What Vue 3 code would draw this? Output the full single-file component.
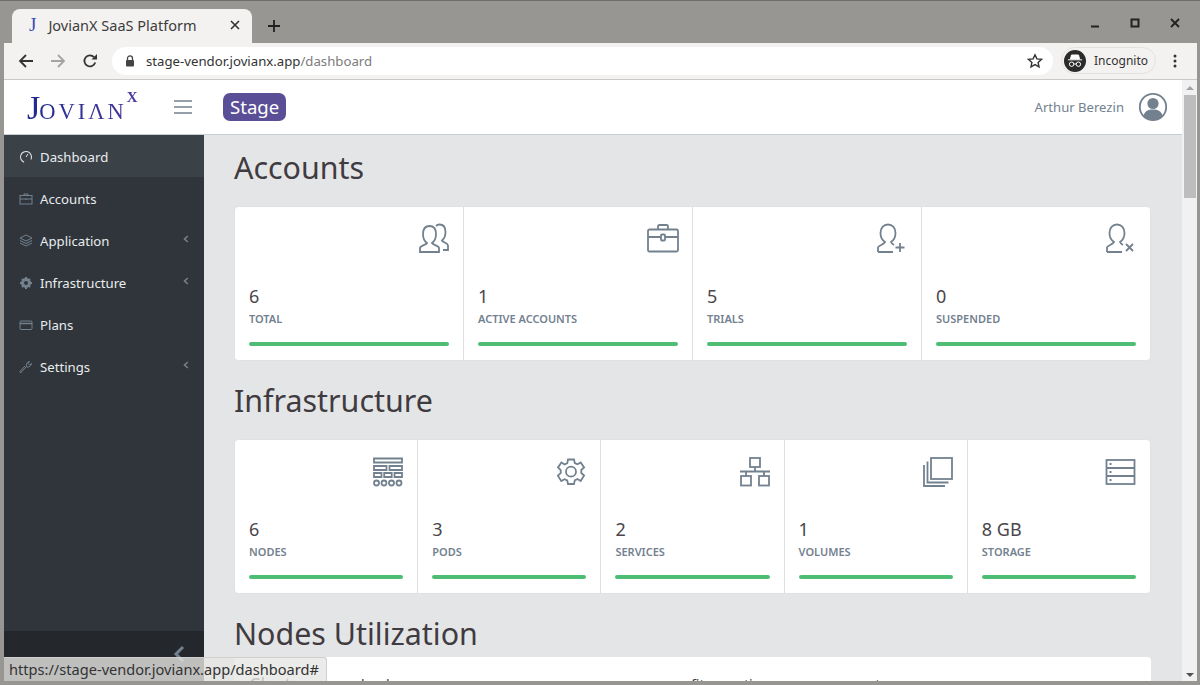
<template>
  <div class="window">
    <!-- browser chrome -->
    <div class="titlebar">
      <div class="tab">
        <span class="favicon">J</span>
        <span class="tab-title">JovianX SaaS Platform</span>
        <svg class="tab-close" width="10" height="10" viewBox="0 0 10 10"><path d="M1 1l8 8M9 1l-8 8" stroke="#333" stroke-width="1.6" /></svg>
      </div>
      <svg class="new-tab" width="14" height="14" viewBox="0 0 14 14"><path d="M7 1v12M1 7h12" stroke="#222" stroke-width="1.8" /></svg>
      <div class="win-btns">
        <svg width="10" height="10" viewBox="0 0 10 10"><path d="M1 8.500h8" stroke="#222" stroke-width="2" /></svg>
        <svg width="10" height="10" viewBox="0 0 10 10"><rect x="1.500" y="1.500" width="7" height="7" fill="none" stroke="#222" stroke-width="2" /></svg>
        <svg width="10" height="10" viewBox="0 0 10 10"><path d="M1 1l8 8M9 1l-8 8" stroke="#222" stroke-width="1.8" /></svg>
      </div>
    </div>
    <div class="toolbar">
      <svg class="nav-ico" width="16" height="16" viewBox="0 0 16 16"><path d="M15 8H2M8 2L2 8l6 6" fill="none" stroke="#333" stroke-width="1.8" /></svg>
      <svg class="nav-ico" width="16" height="16" viewBox="0 0 16 16"><path d="M1 8h13M8 2l6 6-6 6" fill="none" stroke="#a3a3a3" stroke-width="1.8" /></svg>
      <svg class="nav-ico" width="16" height="16" viewBox="0 0 16 16"><path d="M13.200 9.500A5.500 5.500 0 1 1 12 4.200" fill="none" stroke="#333" stroke-width="1.8" /><path d="M9.500 6.500H15V1z" fill="#333" /></svg>
      <div class="omnibox">
        <svg width="10" height="12" viewBox="0 0 10 12"><path d="M2.500 5V3.400a2.500 2.500 0 0 1 5 0V5" fill="none" stroke="#444" stroke-width="1.3" /><rect x="1" y="5" width="8" height="6.500" rx="1" fill="#444" /></svg>
        <span class="url">stage-vendor.jovianx.app<span class="url-path">/dashboard</span></span>
        <svg class="star" width="16" height="16" viewBox="0 0 16 16"><path d="M8 1.800l1.900 4.100 4.500.5-3.300 3 .9 4.400L8 11.600l-4 2.200.9-4.400-3.300-3 4.500-.5z" fill="none" stroke="#333" stroke-width="1.4" /></svg>
      </div>
      <div class="incognito">
        <span class="inc-ico">
          <svg width="16" height="14" viewBox="0 0 16 14"><path d="M4.500 1h7l1 4h-9zM1 5.800h14" stroke="#fff" stroke-width="1" fill="#fff" /><circle cx="4.600" cy="10.200" r="2.200" fill="none" stroke="#fff" /><circle cx="11.400" cy="10.200" r="2.200" fill="none" stroke="#fff" /><path d="M6.800 10h2.400" stroke="#fff" /></svg>
        </span>
        <span>Incognito</span>
      </div>
      <svg class="menu-dots" width="4" height="14" viewBox="0 0 4 14"><circle cx="2" cy="2" r="1.500" fill="#333" /><circle cx="2" cy="7" r="1.500" fill="#333" /><circle cx="2" cy="12" r="1.500" fill="#333" /></svg>
    </div>

    <!-- page -->
    <div class="viewport">
      <div class="page">
        <header class="app-header">
          <div class="logo"><span class="logo-j">J</span><span class="logo-rest">OVIΛN</span><sup class="logo-x">X</sup></div>
          <svg class="burger" width="20" height="16" viewBox="0 0 20 16"><path d="M1 2h18M1 8h18M1 14h18" stroke="#73818f" stroke-width="1.500" /></svg>
          <span class="badge">Stage</span>
          <span class="user-name">Arthur Berezin</span>
          <svg width="30" height="30" viewBox="0 0 30 30">
            <circle cx="15" cy="15" r="13.200" fill="none" stroke="#73818f" stroke-width="1.800" />
            <circle cx="15" cy="11.500" r="5.600" fill="#73818f" />
            <path d="M5.500 24c1-4.800 4.500-6.500 9.500-6.500s8.500 1.700 9.500 6.500a13 13 0 0 1-19 0z" fill="#73818f" />
          </svg>
        </header>
        <div class="app-body">
          <aside class="sidebar">
            <nav class="nav">
              <a v-for="item in navItems" :key="item.label" class="nav-item" :class="{ active: item.active }">
                <svg class="nav-icon" width="14" height="14" viewBox="0 0 14 14" v-html="item.icon"></svg>
                <span class="nav-label">{{ item.label }}</span>
                <svg v-if="item.sub" class="nav-caret" width="6" height="8" viewBox="0 0 6 8"><path d="M4.800 1L1.500 4l3.300 3" fill="none" stroke="#73818f" stroke-width="1.600" /></svg>
              </a>
            </nav>
            <div class="sidebar-footer">
              <svg width="12" height="18" viewBox="0 0 12 18"><path d="M10 2L3 9l7 7" fill="none" stroke="#73818f" stroke-width="3" /></svg>
            </div>
          </aside>
          <main class="main">
            <h3 class="section-title">Accounts</h3>
            <div class="stat-card">
              <div v-for="s in accountStats" :key="s.label" class="stat">
                <svg class="stat-icon" width="32" height="32" viewBox="0 0 32 32" v-html="s.icon"></svg>
                <div class="stat-value">{{ s.value }}</div>
                <div class="stat-label">{{ s.label }}</div>
                <div class="stat-bar"></div>
              </div>
            </div>
            <h3 class="section-title">Infrastructure</h3>
            <div class="stat-card">
              <div v-for="s in infraStats" :key="s.label" class="stat">
                <svg class="stat-icon" width="32" height="32" viewBox="0 0 32 32" v-html="s.icon"></svg>
                <div class="stat-value">{{ s.value }}</div>
                <div class="stat-label">{{ s.label }}</div>
                <div class="stat-bar"></div>
              </div>
            </div>
            <h3 class="section-title util-title">Nodes Utilization</h3>
            <div class="util-card">
              <span class="util-heading">Cluster</span>
              <span>load</span>
              <span>fit</span>
              <span>time</span>
              <span>rate</span>
            </div>
          </main>
        </div>
      </div>
      <div class="scrollbar">
        <span class="arrow-up"></span>
        <div class="scroll-track"><div class="scroll-thumb"></div></div>
        <span class="arrow-down"></span>
      </div>
      <div class="status-bubble">https://stage-vendor.jovianx.app/dashboard#</div>
    </div>
  </div>
</template>

<script setup>
const s = 'fill="none" stroke="#73818f" stroke-width="1"'
const navItems = [
  { label: 'Dashboard', active: true, icon: `<circle cx="7" cy="7" r="5.500" fill="none" stroke="#e4e7ea" stroke-dasharray="26 9" transform="rotate(110 7 7)"/><path d="M7 7l2-3" stroke="#e4e7ea"/>` },
  { label: 'Accounts', icon: `<rect x="1" y="3.500" width="12" height="8.500" ${s}/><path d="M5 3.500V2h4v1.500M1 7h12M7 6.500v1.500" ${s}/>` },
  { label: 'Application', sub: true, icon: `<path d="M7 1l6 3-6 3-6-3zM1 6.500l6 3 6-3M1 9l6 3 6-3" ${s}/>` },
  { label: 'Infrastructure', sub: true, icon: `<circle cx="7" cy="7" r="3.500" fill="none" stroke="#73818f" stroke-width="3"/><path d="M7 1v2M7 11v2M1 7h2M11 7h2M3 3l1.500 1.500M11 3L9.500 4.500M3 11l1.500-1.500M11 11L9.500 9.500" stroke="#73818f" stroke-width="2"/>` },
  { label: 'Plans', icon: `<rect x="1" y="3" width="12" height="8.500" rx="1" ${s}/><path d="M1 5.500h12" stroke="#73818f" stroke-width="1.500"/>` },
  { label: 'Settings', sub: true, icon: `<path d="M1.500 13l6-6.500c-.8-2 .2-4.500 3-5L9 3.500 10.500 5l2-1.500c-.3 2.500-2.500 4-5 3.500" ${s}/><path d="M1.500 13l-.5-1.500 5-5.500" ${s}/>` }
]

const ico = 'fill="none" stroke="#73818f" stroke-width="1.800"'
const accountStats = [
  { value: '6', label: 'TOTAL', icon: `<path d="M2 29v-4c0-2.500 6-3 7-5-3-2-4-5-4-9 0-5 2.500-8 6.500-8s6.500 3 6.500 8c0 4-1 7-4 9 1 2 7 2.500 7 5v4z" ${ico}/><path d="M18 3c1-1 2-1.500 3.500-1.500 4 0 6 3 6 7.500 0 4-1 6.500-3.500 8.500 1 2 6 2.500 6 5v4.500h-5" ${ico}/>` },
  { value: '1', label: 'ACTIVE ACCOUNTS', icon: `<rect x="1" y="6.500" width="30" height="22" rx="1.500" ${ico}/><path d="M11 6.500V3.500c0-1 .5-1.500 1.500-1.500h7c1 0 1.500.5 1.500 1.500v3M1 14h13M18 14h13" ${ico}/><rect x="14" y="11.500" width="4" height="6" rx="1" ${ico}/>` },
  { value: '5', label: 'TRIALS', icon: `<path d="M2 29v-4.500c0-2 5.500-2.500 7-5.500-3-2-4.500-5-4.500-9 0-5 3-8.500 7.500-8.500s7.500 3.500 7.500 8.500c0 4-1.500 7-4.500 9 .5 1.200 1.500 2 3 3M2 29h15" ${ico}/><path d="M24 20v9M19.500 24.500h9" ${ico}/>` },
  { value: '0', label: 'SUSPENDED', icon: `<path d="M2 29v-4.500c0-2 5.500-2.500 7-5.500-3-2-4.500-5-4.500-9 0-5 3-8.500 7.500-8.500s7.500 3.500 7.500 8.500c0 4-1.500 7-4.500 9 .5 1.200 1.500 2 3 3M2 29h15" ${ico}/><path d="M21 21l7 7M28 21l-7 7" ${ico}/>` }
]
const infraStats = [
  { value: '6', label: 'NODES', icon: `<path d="M2 2.500h28v4H2zM2 10h12.500v4H2zM17.500 10H30v4H17.500zM2 17h7.500v4H2zM12.200 17h7.500v4h-7.500zM22.500 17H30v4h-7.500z" ${ico}/><circle cx="4.500" cy="27" r="2.500" ${ico}/><circle cx="12" cy="27" r="2.500" ${ico}/><circle cx="19.500" cy="27" r="2.500" ${ico}/><circle cx="27" cy="27" r="2.500" ${ico}/>` },
  { value: '3', label: 'PODS', icon: `<path d="M13 2h6l.8 3.600 2.700 1.200 3.200-1.900 3.400 5-2.800 2.600v3l2.800 2.500-3.400 5.500-3.200-1.900-2.700 1.200L19 26.500h-6l-.8-3.600-2.700-1.200-3.200 1.900-3.400-5.500 2.800-2.500v-3L3 10l3.400-5 3.200 1.900 2.700-1.200z" transform="translate(0 1.500)" ${ico}/><circle cx="16" cy="15.700" r="5" ${ico}/>` },
  { value: '2', label: 'SERVICES', icon: `<rect x="11" y="2" width="10" height="9" ${ico}/><rect x="2" y="20" width="10" height="9.500" ${ico}/><rect x="20" y="20" width="10" height="9.500" ${ico}/><path d="M16 11v4.500M1 15.500h30M7 15.500V20M25 15.500V20" ${ico}/>` },
  { value: '1', label: 'VOLUMES', icon: `<rect x="9" y="2" width="21" height="21" ${ico}/><path d="M5.500 5.500V26.500H26.500M2 9V30H23" ${ico}/>` },
  { value: '8 GB', label: 'STORAGE', icon: `<rect x="1.500" y="4" width="28" height="24" ${ico}/><path d="M1.500 12h28M1.500 20h28M4.500 8h2M4.500 16h2M4.500 24h2" ${ico}/>` }
]
</script>

<style>
html, body { margin: 0; height: 685px; overflow: hidden; background: #8f8d8a; }
</style>

<style scoped>
* { box-sizing: border-box; }

.window {
  width: 1200px;
  height: 685px;
  display: flex;
  flex-direction: column;
  font-family: "Noto Sans", "Open Sans", sans-serif;
  background: #989693;
  padding: 0 3px 4px 4px;
  border-top: 1px solid #6f6d6b;
  position: relative;
  overflow: hidden;
}

/* browser chrome */
.titlebar {
  height: 42px;
  flex: none;
  display: flex;
  align-items: flex-end;
  padding-left: 8px;
}

.tab {
  width: 240px;
  height: 34px;
  background: #f3f2f1;
  border-radius: 8px 8px 0 0;
  display: flex;
  align-items: center;
  padding: 0 12px 2px 17px;
  gap: 12px;
}

.favicon {
  font-family: "Liberation Serif", serif;
  font-size: 19px;
  color: #3a4ab8;
}

.tab-title { font-size: 14.500px; color: #3c3c3c; flex: 1; white-space: nowrap; }
.new-tab { margin: 0 0 10px 15px; }

.win-btns {
  margin-left: auto;
  display: flex;
  gap: 30px;
  padding: 0 17px 15px 0;
  align-self: flex-end;
}

.toolbar {
  height: 37px;
  flex: none;
  background: #f3f2f1;
  border-bottom: 1px solid #c9c8c6;
  display: flex;
  align-items: center;
  padding: 0 0 1px 14px;
  gap: 16px;
}

.nav-ico { flex: none; }

.omnibox {
  width: 941px;
  height: 28px;
  margin-left: -2px;
  background: #fff;
  border-radius: 14px;
  display: flex;
  align-items: center;
  padding: 0 10px 0 13px;
  gap: 11px;
}

.url { font-size: 13.200px; color: #333; flex: 1; }
.url-path { color: #7c7c7c; }

.incognito {
  width: 95px;
  height: 27px;
  margin-left: -8px;
  border: 1px solid #e3e2e1;
  border-radius: 14px;
  display: flex;
  align-items: center;
  gap: 8px;
  padding-left: 2px;
  font-size: 12px;
  color: #333;
  flex: none;
}

.inc-ico {
  width: 22px;
  height: 22px;
  border-radius: 50%;
  background: #2b2b2b;
  display: flex;
  align-items: center;
  justify-content: center;
}

.menu-dots { margin-left: 1px; }

/* page */
.viewport {
  flex: 1;
  min-height: 0;
  display: flex;
  position: relative;
}

.page {
  flex: 1;
  min-width: 0;
  display: flex;
  flex-direction: column;
  background: #e4e5e6;
}

.app-header {
  height: 55px;
  flex: none;
  background: #fff;
  border-bottom: 1px solid #c8ced3;
  display: flex;
  align-items: center;
  padding: 0 14px 0 23px;
}

.logo {
  width: 146px;
  font-family: "Liberation Serif", serif;
  background: linear-gradient(90deg, #1d2a8f, #5b3ea3);
  -webkit-background-clip: text;
  background-clip: text;
  color: transparent;
  display: flex;
  align-items: baseline;
  white-space: nowrap;
  padding-top: 2px;
}

.logo-j { font-size: 34px; line-height: 1; margin-right: -1px; }
.logo-rest { font-size: 22.500px; letter-spacing: 3px; line-height: 1; }
.logo-x { font-size: 15px; line-height: 1; align-self: flex-start; font-weight: 700; margin: -1px 0 0 0; }

.burger { flex: none; }

.badge {
  margin-left: 30px;
  background: #5a4e97;
  color: #fff;
  font-size: 18.600px;
  line-height: 27px;
  height: 28px;
  padding: 0 7px;
  border-radius: 7px;
}

.user-name {
  margin-left: auto;
  margin-right: 14px;
  color: #73818f;
  font-size: 13.100px;
}

.app-body {
  flex: 1;
  min-height: 0;
  display: flex;
}

.sidebar {
  width: 200px;
  flex: none;
  background: #2f353a;
  display: flex;
  flex-direction: column;
  justify-content: space-between;
}

.nav-item {
  height: 42px;
  display: flex;
  align-items: center;
  padding: 1px 15px 0;
  color: #fff;
  font-size: 13.200px;
}

.nav-item.active { background: #3a4248; }
.nav-icon { flex: none; margin-right: 7px; }
.nav-label { flex: 1; color: #e9ecef; }
.nav-caret { flex: none; margin-top: -3px; }

.sidebar-footer {
  height: 50px;
  background: #24282c;
  display: flex;
  justify-content: flex-end;
  padding: 14px 19px 0 0;
}

.main {
  flex: 1;
  min-width: 0;
  overflow: hidden;
  padding: 0 31px 0 30px;
}

.section-title {
  margin: 0;
  height: 71px;
  padding-top: 12px;
  font-size: 30.400px;
  font-weight: 400;
  line-height: 42px;
  color: #3f3b40;
}

.util-title { height: 56px; }

.stat-card {
  display: flex;
  background: #fff;
  border: 1px solid #dfe1e3;
  border-radius: 4px;
  height: 155px;
  margin-bottom: 7px;
}

.stat {
  flex: 1 1 0;
  display: flex;
  flex-direction: column;
  padding: 16px 14px 14px;
  border-right: 1px solid #dcdee0;
}

.stat:last-child { border-right: none; }
.stat-icon { align-self: flex-end; flex: none; margin-right: -1px; }

.stat-value {
  margin-top: 29px;
  font-size: 18px;
  line-height: 24px;
  color: #4a464b;
}

.stat-label {
  margin-top: 2px;
  font-size: 11px;
  line-height: 18px;
  font-weight: 600;
  color: #73818f;
}

.stat-bar {
  margin-top: 14px;
  height: 4px;
  border-radius: 2px;
  background: #4dbd74;
}

.util-card {
  background: #fff;
  border-radius: 4px;
  height: 120px;
  padding: 18px 15px 0;
  display: grid;
  grid-template-columns: 112px 330px 53px 118px 1fr;
  align-items: start;
  font-size: 14px;
  line-height: 20px;
  color: #3f3b40;
}

.util-heading { font-size: 18px; line-height: 18px; color: #3f3b40; }

.scrollbar {
  width: 15px;
  flex: none;
  background: #f1f1f1;
  display: flex;
  flex-direction: column;
  align-items: center;
}

.arrow-up, .arrow-down {
  width: 0;
  height: 0;
  border-left: 4px solid transparent;
  border-right: 4px solid transparent;
  flex: none;
}

.arrow-up { border-bottom: 4px solid #a3a3a3; margin: 6px 0 5px; }
.arrow-down { border-top: 4px solid #505050; margin: 5px 0 4px; }

.scroll-track { flex: 1; width: 100%; padding: 0 1.500px; }
.scroll-thumb { height: 103px; background: #bdbdbd; }

.status-bubble {
  position: absolute;
  left: 0;
  bottom: 0;
  height: 24px;
  padding: 0 7px 1px 5px;
  line-height: 22px;
  background: rgba(230, 230, 228, 0.8);
  border-top: 1px solid #cfcfcd;
  border-right: 1px solid #cfcfcd;
  border-radius: 0 3px 0 0;
  font-size: 14.600px;
  color: #333;
  white-space: nowrap;
}
</style>
